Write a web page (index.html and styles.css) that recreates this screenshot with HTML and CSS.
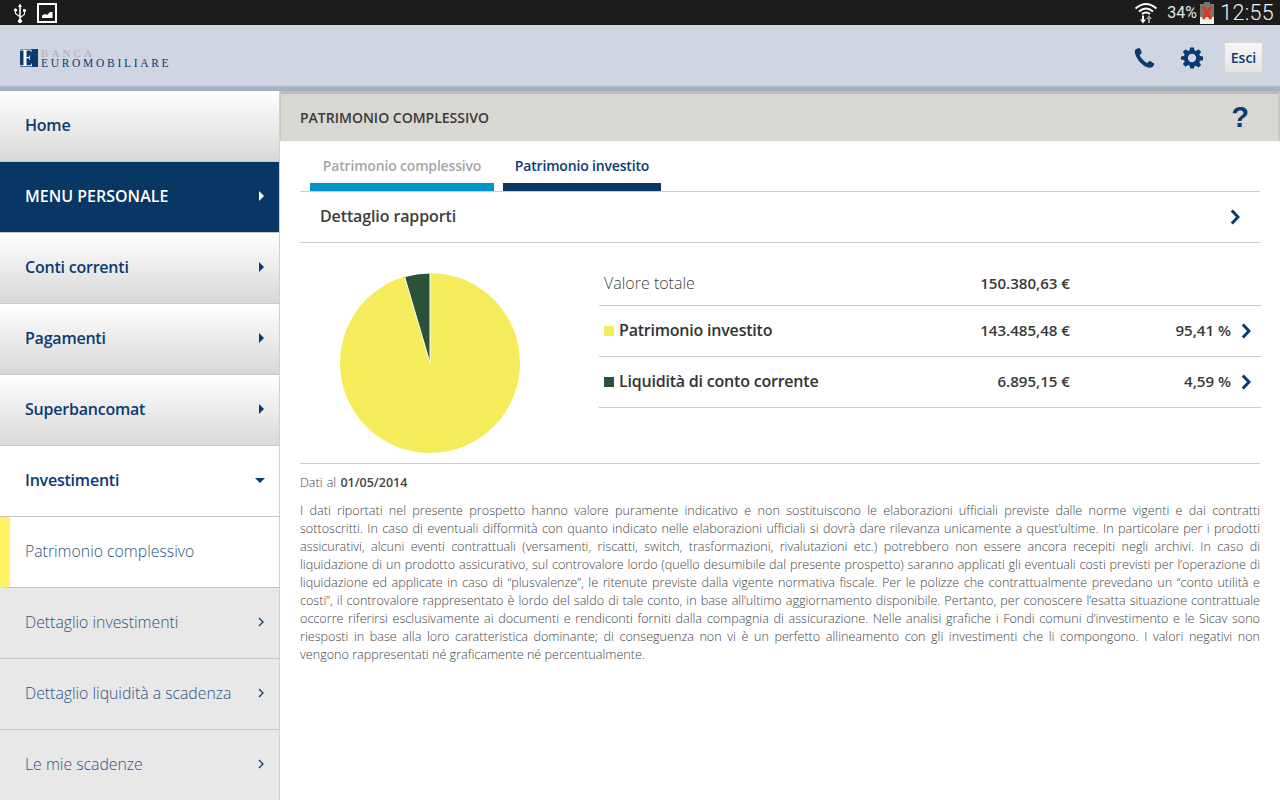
FILE: index.html
```html
<!DOCTYPE html>
<html lang="it">
<head>
<meta charset="utf-8">
<title>Patrimonio complessivo</title>
<link rel="stylesheet" href="styles.css">
</head>
<body>
<div class="statusbar">
  <div class="status-left">
    <svg class="ic-usb" width="16" height="20" viewBox="0 0 16 20"><path d="M8 0.500 10 4H8.800V13.500L12 11V8.800H11V6.200H14V8.800H13V11.600L8.800 15V16.200A2 2 0 1 1 7.200 16.200V14L3 10.800V8.600A1.600 1.600 0 1 1 4 8.600V10.300L7.200 12.400V4H6Z" fill="#fff"/></svg>
    <svg class="ic-pic" width="20" height="20" viewBox="0 0 20 20"><rect x="1" y="1" width="18" height="18" fill="#1c1c1c" stroke="#fff" stroke-width="2"/><path d="M5 15V12.500L8 11 10 12 13 9 15.500 9V15Z" fill="#fff"/></svg>
  </div>
  <div class="status-right">
    <svg class="ic-wifi" width="24" height="24" viewBox="0 0 24 24"><path d="M1.500 7.500Q12-1.500 22.500 7.500M5 10.500Q12 4.500 19 10.500M8 13Q12 10 16 13" fill="none" stroke="#fff" stroke-width="2"/><path d="M8 14.500h2v4h2l-3 4-3-4h2z" fill="#fff"/><path d="M15 14l3 4h-2v4h-2v-4h-2z" fill="#999"/></svg>
    <span class="batt-pct">34%</span>
    <svg class="ic-batt" width="14" height="22" viewBox="0 0 14 22"><rect x="0" y="2" width="14" height="20" fill="#777"/><rect x="4" y="0" width="6" height="2" fill="#777"/><rect x="0" y="15" width="14" height="7" fill="#f4f4f4"/><path d="M3 5 11 17M11 5 3 17" stroke="#e8321a" stroke-width="3"/></svg>
    <span class="clock">12:55</span>
  </div>
</div>

<header class="appbar">
  <div class="logo">
    <svg class="logo-mark" width="18" height="18" viewBox="0 0 18 18"><rect width="18" height="18" fill="#0a3a72"/><path d="M0 .5H11.500V3H11L10.500 1.500H6.500V8H9V6.500H9.800V11H9V9.200H6.500V16.300H11L11.500 14.500H12V17.300H0V16.300H3.500V1.500H0Z" fill="#fff"/></svg>
    <div class="logo-text">
      <span class="logo-top">BANCA</span>
      <span class="logo-bottom">EUROMOBILIARE</span>
    </div>
  </div>
  <div class="app-actions">
    <svg class="ic-phone" width="22" height="22" viewBox="0 0 22 22"><path d="M5.500 1 2.500 2.500C1.500 3.500 1.500 6 3 9 5 13.500 9 18 13.500 20 15.500 21 18 21 19.500 20L21 18C21.500 17.300 21.300 16.600 20.700 16.200L17.500 14.300C17 14 16.300 14 15.800 14.500L14.300 16C11.500 15 7.800 11 6.700 8L8.300 6.500C8.800 6 8.800 5.400 8.500 4.800L7 1.600C6.700 1 6 .7 5.500 1Z" fill="#0a3a72"/></svg>
    <svg class="ic-gear" width="24" height="24" viewBox="0 0 24 24"><path fill="#0a3a72" fill-rule="evenodd" d="M10 1h4l.6 3.200 1.800.8L19.100 3.100 21.900 5.900 20 8.600l.8 1.800L24 11v4l-3.200.4-.8 1.800 1.900 2.800-2.800 2.800-2.700-1.900-1.800.8L14 24h-4l-.6-3.200-1.800-.8-2.700 1.900L2.100 19.100 4 16.400l-.8-1.800L0 14v-3l3.200-.6.800-1.800L2.100 5.900 4.900 3.100 7.600 5l1.800-.8ZM12 8a4.500 4.500 0 1 0 0 9 4.500 4.500 0 0 0 0-9Z" transform="translate(12 12) scale(.92) translate(-12 -12.500)"/></svg>
    <button class="esci">Esci</button>
  </div>
</header>

<div class="layout">
  <nav class="sidebar">
    <a class="nav-item nav-main">Home</a>
    <a class="nav-item nav-main nav-personal">MENU PERSONALE<i class="tri-right"></i></a>
    <a class="nav-item nav-main">Conti correnti<i class="tri-right"></i></a>
    <a class="nav-item nav-main">Pagamenti<i class="tri-right"></i></a>
    <a class="nav-item nav-main">Superbancomat<i class="tri-right"></i></a>
    <a class="nav-item nav-open">Investimenti<i class="tri-down"></i></a>
    <a class="nav-item nav-sub nav-current">Patrimonio complessivo</a>
    <a class="nav-item nav-sub">Dettaglio investimenti<svg class="sub-chev" width="6" height="10" viewBox="0 0 6 10"><path d="M1 1l4 4-4 4" fill="none" stroke="#0a3a72" stroke-width="1.300"/></svg></a>
    <a class="nav-item nav-sub">Dettaglio liquidità a scadenza<svg class="sub-chev" width="6" height="10" viewBox="0 0 6 10"><path d="M1 1l4 4-4 4" fill="none" stroke="#0a3a72" stroke-width="1.300"/></svg></a>
    <a class="nav-item nav-sub">Le mie scadenze<svg class="sub-chev" width="6" height="10" viewBox="0 0 6 10"><path d="M1 1l4 4-4 4" fill="none" stroke="#0a3a72" stroke-width="1.300"/></svg></a>
  </nav>

  <main class="content">
    <div class="page-title">
      <h1>PATRIMONIO COMPLESSIVO</h1>
      <span class="help">?</span>
    </div>
    <div class="page-body">
      <div class="tabs">
        <a class="tab tab-inactive">Patrimonio complessivo</a>
        <a class="tab tab-active">Patrimonio investito</a>
      </div>
      <div class="detail-row">
        <span>Dettaglio rapporti</span>
        <svg width="10" height="16" viewBox="0 0 10 16"><path d="M1.800 1.500 8 8l-6.200 6.500" fill="none" stroke="#0a3a72" stroke-width="3"/></svg>
      </div>
      <section class="summary">
        <svg class="pie" width="180" height="180" viewBox="0 0 180 180">
          <circle cx="90" cy="90" r="90" fill="#f5ec5b"/>
          <path d="M90 90 64.600 3.700A90 90 0 0 1 90 0Z" fill="#2a5238" stroke="#fff" stroke-width="1"/>
        </svg>
        <div class="table">
          <div class="trow total">
            <span class="label">Valore totale</span>
            <span class="amount">150.380,63 €</span>
          </div>
          <div class="trow">
            <span class="label strong"><i class="swatch yellow"></i>Patrimonio investito</span>
            <span class="amount">143.485,48 €</span>
            <span class="pct">95,41 %</span>
            <svg class="row-chev" width="10" height="16" viewBox="0 0 10 16"><path d="M1.800 1.500 8 8l-6.200 6.500" fill="none" stroke="#0a3a72" stroke-width="3"/></svg>
          </div>
          <div class="trow">
            <span class="label strong"><i class="swatch green"></i>Liquidità di conto corrente</span>
            <span class="amount">6.895,15 €</span>
            <span class="pct">4,59 %</span>
            <svg class="row-chev" width="10" height="16" viewBox="0 0 10 16"><path d="M1.800 1.500 8 8l-6.200 6.500" fill="none" stroke="#0a3a72" stroke-width="3"/></svg>
          </div>
        </div>
      </section>
      <p class="date">Dati al <b>01/05/2014</b></p>
      <p class="notes">
        <span>I dati riportati nel presente prospetto hanno valore puramente indicativo e non sostituiscono le elaborazioni ufficiali previste dalle norme vigenti e dai contratti</span>
        <span>sottoscritti. In caso di eventuali difformità con quanto indicato nelle elaborazioni ufficiali si dovrà dare rilevanza unicamente a quest’ultime. In particolare per i prodotti</span>
        <span>assicurativi, alcuni eventi contrattuali (versamenti, riscatti, switch, trasformazioni, rivalutazioni etc.) potrebbero non essere ancora recepiti negli archivi. In caso di</span>
        <span>liquidazione di un prodotto assicurativo, sul controvalore lordo (quello desumibile dal presente prospetto) saranno applicati gli eventuali costi previsti per l’operazione di</span>
        <span>liquidazione ed applicate in caso di “plusvalenze”, le ritenute previste dalla vigente normativa fiscale. Per le polizze che contrattualmente prevedano un “conto utilità e</span>
        <span>costi”, il controvalore rappresentato è lordo del saldo di tale conto, in base all’ultimo aggiornamento disponibile. Pertanto, per conoscere l’esatta situazione contrattuale</span>
        <span>occorre riferirsi esclusivamente ai documenti e rendiconti forniti dalla compagnia di assicurazione. Nelle analisi grafiche i Fondi comuni d’investimento e le Sicav sono</span>
        <span>riesposti in base alla loro caratteristica dominante; di conseguenza non vi è un perfetto allineamento con gli investimenti che li compongono. I valori negativi non</span>
        <span class="last">vengono rappresentati né graficamente né percentualmente.</span>
      </p>
    </div>
  </main>
</div>
</body>
</html>
```
FILE: styles.css
```css
* { box-sizing: border-box; }
html, body { margin: 0; height: 100%; overflow: hidden; }
body { width: 1280px; height: 800px; background: #fff; font-family: "Open Sans", "Noto Sans", sans-serif; color: #333; }
svg { display: block; flex: none; }

.statusbar { height: 25px; background: #1c1c1c; display: flex; justify-content: space-between; align-items: center; color: #e8e8e8; }
.status-left { display: flex; align-items: center; gap: 9px; padding-left: 12px; }
.status-right { display: flex; align-items: center; padding-right: 6px; }
.ic-wifi { margin-right: 9px; }
.batt-pct { font-family: "Roboto", sans-serif; font-size: 16px; width: 31px; }
.ic-batt { margin: 0 6px 0 2px; }
.clock { font-family: "Roboto", sans-serif; font-size: 21.500px; font-weight: 300; letter-spacing: .3px; color: #f4f4f4; }

.appbar { height: 66px; background: linear-gradient(to bottom, #cfd6e2 0, #cfd6e2 60px, #a9b3c0 62px, #a5afbc 66px); display: flex; justify-content: space-between; align-items: flex-start; padding: 17px 17px 0 20px; }
.logo { display: flex; align-items: flex-start; gap: 3px; margin-top: 7px; }
.logo-text { display: flex; flex-direction: column; font-family: "Liberation Serif", serif; white-space: nowrap; }
.logo-top { font-size: 11px; line-height: 9px; letter-spacing: 3.100px; color: #a9b0bc; }
.logo-bottom { font-size: 11.500px; line-height: 10px; letter-spacing: 2.700px; color: #0a3a72; }
.app-actions { display: flex; align-items: center; }
.ic-phone { margin-right: 25px; }
.ic-gear { margin-right: 20px; }
.esci { width: 39px; height: 31px; padding: 0; border: 1px solid #d5d6d4; background: linear-gradient(#f7f7f7, #e4e4e4); color: #0a3a72; font: 600 14px "Open Sans", sans-serif; }

.layout { display: flex; height: 709px; }
.sidebar { width: 280px; flex: none; border-right: 1px solid #d0d0d0; }
.nav-item { height: 71px; display: flex; align-items: center; justify-content: space-between; padding: 0 14px 2px 25px; color: #0a3a72; font-size: 16px; border-bottom: 1px solid #c8c8c8; }
.nav-main { font-weight: 600; letter-spacing: -.22px; background: linear-gradient(#fff, #d8d8d8); }
.nav-personal { background: #083665; color: #fff; letter-spacing: 0; }
.nav-open { font-weight: 600; letter-spacing: -.22px; background: #fff; }
.nav-sub { background: #e8e8e8; color: #2f5484; font-weight: 300; font-size: 15.800px; padding-right: 15px; }
.nav-current { background: #fff; border-left: 10px solid #fff263; padding-left: 15px; }
.tri-right { width: 0; height: 0; border-left: 5px solid currentColor; border-top: 5px solid transparent; border-bottom: 5px solid transparent; margin-right: 1px; }
.tri-down { width: 0; height: 0; border-top: 5px solid #0a3a72; border-left: 5.500px solid transparent; border-right: 5.500px solid transparent; }

.content { flex: 1; min-width: 0; }
.page-title { height: 50px; border-top: 3px solid #bcbcb8; background: #d8d7d2; border-left: 1px solid #c8c7c2; border-right: 2px solid #c8c7c2; display: flex; align-items: center; justify-content: space-between; padding: 0 29px 0 19px; }
.page-title h1 { margin: 0; font-size: 14px; font-weight: 600; color: #3a3a3a; }
.help { font-family: "Liberation Sans", sans-serif; font-size: 29px; font-weight: 700; color: #0a3a72; }
.page-body { padding: 0 20px; }
.tabs { height: 51px; border-bottom: 1px solid #ccc; display: flex; gap: 9px; padding-left: 10px; align-items: stretch; }
.tab { display: flex; justify-content: center; padding-top: 15px; font-size: 14px; font-weight: 600; letter-spacing: -.17px; border-bottom: 8px solid; }
.tab-inactive { width: 184px; color: #a6a6a6; border-color: #0094cd; }
.tab-active { width: 158px; color: #0a3a72; border-color: #083665; }
.detail-row { height: 51px; border-bottom: 1px solid #ccc; display: flex; align-items: center; justify-content: space-between; padding: 0 20px 2px 20px; font-size: 16px; font-weight: 600; letter-spacing: -.12px; color: #3d3d3d; }
.detail-row svg { margin-top: 2px; }
.summary { display: flex; height: 221px; border-bottom: 1px solid #ccc; padding: 30px 0 0 40px; }
.pie { margin-right: 79px; }
.table { flex: 1; margin-top: -11px; margin-right: -1px; }
.trow { display: flex; align-items: center; height: 51px; border-bottom: 1px solid #ccc; padding: 0 0 2px 5px; font-size: 16px; }
.trow.total { height: 44px; }
.label { flex: 1; font-weight: 300; color: #444; display: flex; align-items: center; }
.label.strong { font-weight: 600; letter-spacing: -.21px; color: #333; }
.amount { width: 150px; text-align: right; font-weight: 600; font-size: 15.100px; margin-right: 191px; color: #3a3a3a; }
.trow .pct + .row-chev { margin: 2px 10px 0 10px; }
.trow:not(.total) .amount { margin-right: 0; }
.pct { width: 161px; text-align: right; font-weight: 600; font-size: 15.100px; color: #3a3a3a; }
.swatch { width: 10px; height: 10px; margin: 2px 5px 0 0; }
.yellow { background: #f5ec5b; }
.green { background: #2a5238; }
.date { margin: 10px 0 0; font-size: 12.500px; line-height: 18px; font-weight: 300; color: #444; word-spacing: 1px; }
.date b { font-weight: 600; }
.notes { margin: 10px 0 0; font-size: 12.600px; line-height: 18px; font-weight: 300; color: #444; }
.notes span { display: block; white-space: nowrap; text-align: justify; text-align-last: justify; }
.notes span.last { text-align-last: left; }
```
